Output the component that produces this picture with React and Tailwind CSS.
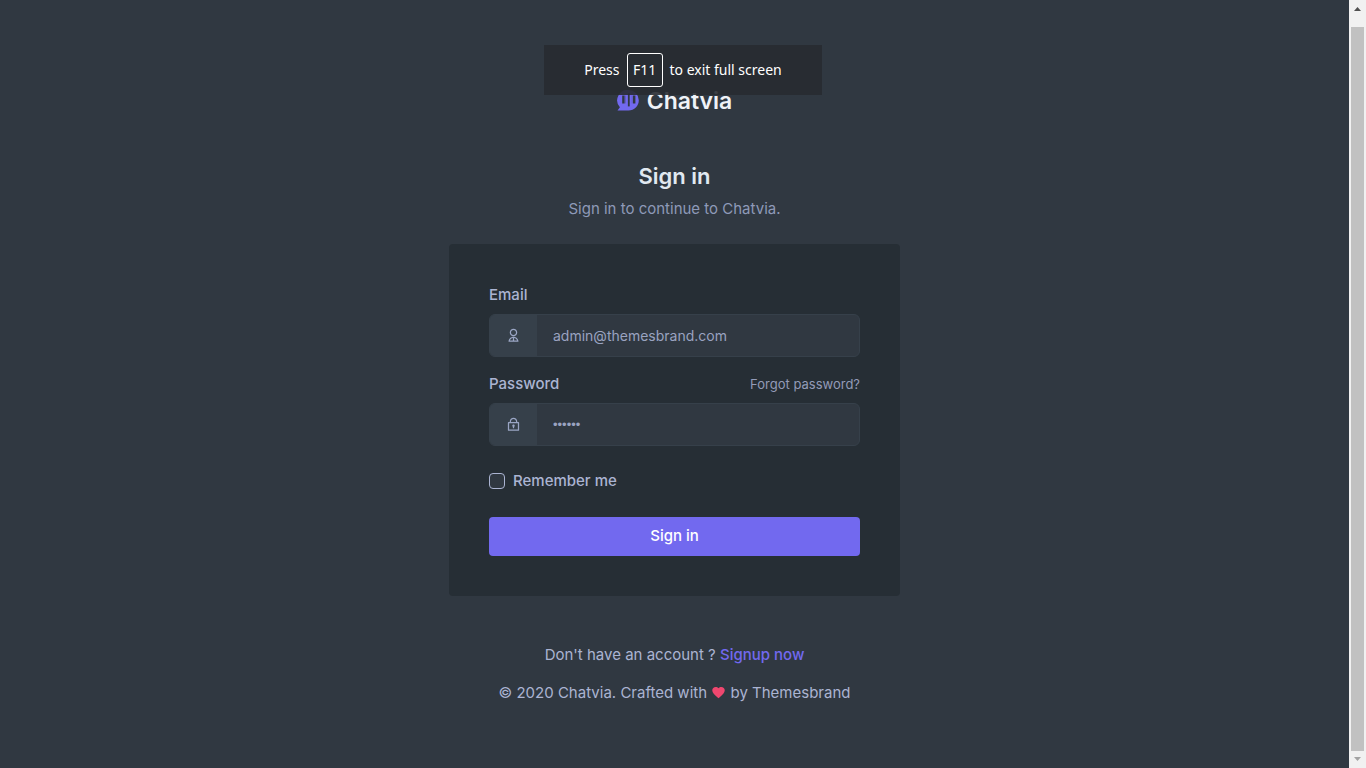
import { RiUser2Line, RiLock2Line } from "react-icons/ri";
import { MdFavorite } from "react-icons/md";

function Logo() {
  return (
    <a href="#home" className="flex h-[30px] items-center justify-center gap-2 text-[#eff2f7]">
      <svg viewBox="0 0 22 22" className="h-[22px] w-[22px]" aria-hidden="true">
        <path
          fill="#7269ef"
          d="M11.5 0a10.3 10.3 0 0 1 10.3 10.3c0 5.9-4.5 10.3-10.3 10.3H0.5l2.4-3.4A10.3 10.3 0 0 1 11.5 0Z"
        />
        <path
          fill="none"
          stroke="#303841"
          strokeWidth="2.4"
          d="M6.4 5.6v7.8M17.2 5.6v7.8"
        />
        <path fill="none" stroke="#303841" strokeWidth="1.8" d="M11.8 3.4v13" />
        <path fill="none" stroke="#5a55b8" strokeWidth="0.8" d="M8.4 5.6v7.8M15.2 5.6v7.8" />
      </svg>
      <span className="text-[23px] font-semibold">Chatvia</span>
    </a>
  );
}

function Field({ id, icon: Icon, inputClass, ...props }) {
  return (
    <div className="flex h-[43px] overflow-hidden rounded-md border border-[#36404a] bg-[#303841]">
      <span className="flex w-[47px] shrink-0 items-center justify-center bg-[#36404a] pr-px pb-px text-[#9aa5c4]">
        <Icon className="h-[15px] w-[15px]" aria-hidden="true" />
      </span>
      <input
        id={id}
        className={`min-w-0 flex-1 bg-transparent px-4 text-[#9aa3c0] outline-none ${inputClass}`}
        {...props}
      />
    </div>
  );
}

function FullScreenNotice() {
  return (
    <div className="absolute inset-x-0 top-[45px] flex justify-center">
      <div className="flex h-[50px] w-[278px] items-center justify-center gap-[7px] bg-[#282b31]/90 font-['Noto_Sans',sans-serif] text-sm text-white">
        <span>Press</span>
        <kbd className="flex h-[34px] w-9 items-center justify-center rounded-[3px] border border-white font-['Noto_Sans',sans-serif]">
          F11
        </kbd>
        <span>to exit full screen</span>
      </div>
    </div>
  );
}

function ScrollTrack() {
  return (
    <div className="flex w-[17px] shrink-0 flex-col items-center bg-[#f1f1f1]" aria-hidden="true">
      <svg viewBox="0 0 17 17" className="mb-[10px] h-[17px] w-[17px]" fill="#505050">
        <path d="M8.5 7 12 11H5Z" />
      </svg>
      <div className="w-[13px] flex-1 bg-[#c1c1c1]" />
      <svg viewBox="0 0 17 17" className="h-[17px] w-[17px]" fill="#a3a3a3">
        <path d="M5 6h7l-3.5 4Z" />
      </svg>
    </div>
  );
}

export default function App() {
  return (
    <div className="relative flex min-h-screen bg-[#303841] font-['Inter',sans-serif] text-[15px] leading-[22px] text-[#abb4d2]">
      <main className="flex flex-1 flex-col items-center px-3 pt-[86px] pb-16">
        <div className="w-full max-w-[451px]">
          <Logo />
          <header className="mt-[46px] mb-6 text-center">
            <h1 className="mb-2 text-[22px] leading-7 font-semibold text-[#e1e9f1]">Sign in</h1>
            <p className="text-[#8e9ab8]">Sign in to continue to Chatvia.</p>
          </header>

          <form className="rounded bg-[#262e35] p-10" onSubmit={(e) => e.preventDefault()}>
            <label htmlFor="email" className="mb-2 block font-medium">
              Email
            </label>
            <Field
              id="email"
              icon={RiUser2Line}
              inputClass="text-sm"
              type="email"
              defaultValue="admin@themesbrand.com"
            />

            <div className="mt-4 mb-2 flex items-center justify-between">
              <label htmlFor="password" className="font-medium">
                Password
              </label>
              <a href="#forgot" className="text-[13px] text-[#939bb8]">
                Forgot password?
              </a>
            </div>
            <Field
              id="password"
              icon={RiLock2Line}
              inputClass="font-['Liberation_Sans',sans-serif] text-[13px]"
              type="password"
              defaultValue="123456"
            />

            <div className="mt-6 mb-6 flex h-[23px] items-center gap-2 pb-px">
              <input
                id="remember"
                type="checkbox"
                className="h-4 w-4 appearance-none rounded border border-[#abb4d2] bg-[#303841] checked:bg-[#7269ef]"
              />
              <label htmlFor="remember" className="font-medium">
                Remember me
              </label>
            </div>

            <button type="submit" className="h-[39px] w-full rounded bg-[#7269ef] pb-px font-medium text-white">
              Sign in
            </button>
          </form>

          <footer className="mt-12 text-center">
            <p className="mb-4">
              Don't have an account ?{" "}
              <a href="#signup" className="font-medium text-[#7269ef]">
                Signup now
              </a>
            </p>
            <p>
              © 2020 Chatvia. Crafted with{" "}
              <MdFavorite className="inline h-[15px] w-[15px] align-[-2px] text-[#ef476f]" aria-label="love" /> by
              Themesbrand
            </p>
          </footer>
        </div>
      </main>
      <ScrollTrack />
      <FullScreenNotice />
    </div>
  );
}
